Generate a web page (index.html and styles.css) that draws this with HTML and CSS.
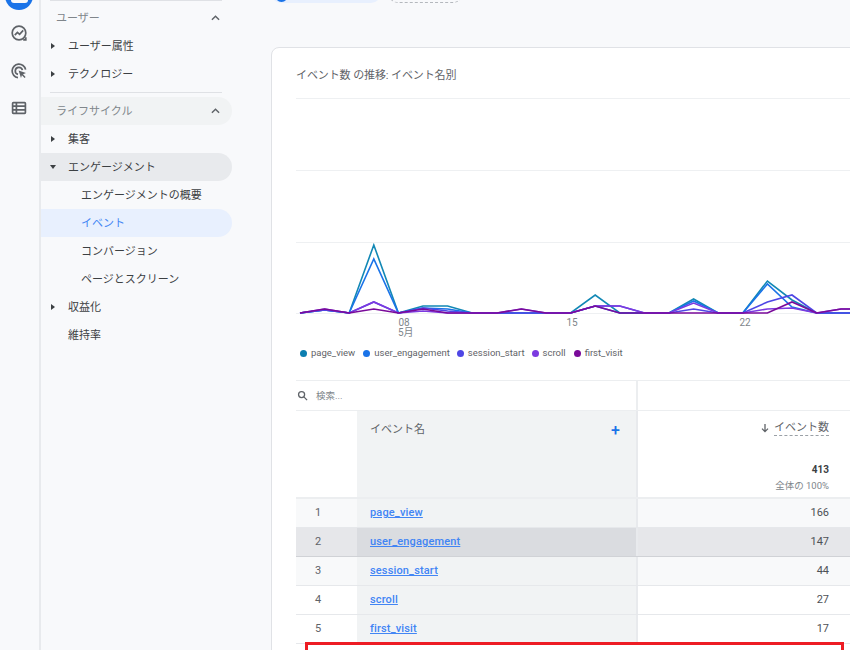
FILE: index.html
```html
<!DOCTYPE html>
<html lang="ja">
<head>
<meta charset="utf-8">
<title>イベント</title>
<link rel="stylesheet" href="styles.css">
</head>
<body>
<div class="page">
  <aside class="rail">
    <span class="rail-home"><i class="rail-home-in"></i></span>
    <svg class="rail-icon" viewBox="0 0 18 18"><circle cx="9" cy="9" r="6.8"/><path d="M4.8 11.2 7.4 8.4l2.2 2 3.6-4"/><path d="M13.2 15.8h2.6v-2.6"/></svg>
    <svg class="rail-icon" viewBox="0 0 18 18"><path d="M15.6 7.6A6.8 6.8 0 1 0 8 15.7"/><path d="M12.4 8.2A3.6 3.6 0 1 0 8 12.4"/><path class="fill" d="M8.6 8.4 16 11l-3 1.2 2.6 2.8-1 1-2.7-2.8L11 16z"/></svg>
    <svg class="rail-icon" viewBox="0 0 18 18"><rect x="2.6" y="3.6" width="12.8" height="10.8" rx=".8"/><path d="M2.6 7.2h12.8M2.6 10.8h12.8M6.4 3.6v10.8"/></svg>
  </aside>

  <nav class="nav">
    <hr class="nav-rule nav-rule-top">
    <div class="nav-head"><span>ユーザー</span><svg class="chev" viewBox="0 0 10 6"><path d="M1 5l4-4 4 4"/></svg></div>
    <div class="nav-item"><i class="caret"></i>ユーザー属性</div>
    <div class="nav-item"><i class="caret"></i>テクノロジー</div>
    <hr class="nav-rule">
    <div class="nav-head nav-head-on"><span>ライフサイクル</span><svg class="chev" viewBox="0 0 10 6"><path d="M1 5l4-4 4 4"/></svg></div>
    <div class="nav-item"><i class="caret"></i>集客</div>
    <div class="nav-item nav-item-open"><i class="caret caret-down"></i>エンゲージメント</div>
    <div class="nav-sub">エンゲージメントの概要</div>
    <div class="nav-sub nav-sub-on">イベント</div>
    <div class="nav-sub">コンバージョン</div>
    <div class="nav-sub">ページとスクリーン</div>
    <div class="nav-item"><i class="caret"></i>収益化</div>
    <div class="nav-item"><i class="caret caret-none"></i>維持率</div>
  </nav>

  <main class="main">
    <div class="chips">
      <div class="chip"><span class="chip-dot"></span></div>
      <div class="chip-add"></div>
    </div>
    <section class="card">
      <h2 class="card-title">イベント数 の推移: イベント名別</h2>
      <svg class="chart" viewBox="296 98 554 232" width="554" height="232">
        <g class="grid">
          <path d="M296 98.5H850M296 170.5H850M296 242.5H850M296 313.5H850"/>
        </g>
        <g class="series">
          <polyline stroke="#1288b5" points="300,313 324.6,310 349.2,313 373.8,245 398.4,313 423,306 447.6,306 472.2,313 546,313 570.6,313 595.2,295 619.8,313 669,313 693.6,299 718.2,313 742.8,313 767.4,281 792,300 816.6,313 850,313"/>
          <polyline stroke="#1a73e8" points="300,313 324.6,310 349.2,313 373.8,259 398.4,313 423,308 447.6,309 472.2,313 546,313 570.6,313 595.2,306 619.8,313 669,313 693.6,301 718.2,313 742.8,313 767.4,284 792,307 816.6,313 850,313"/>
          <polyline stroke="#4f46e5" points="300,313 324.6,310 349.2,313 373.8,302 398.4,313 423,308 447.6,311 472.2,313 546,313 570.6,313 595.2,306 619.8,306 644.4,313 669,313 693.6,309 718.2,313 742.8,313 767.4,302 792,295 816.6,313 850,313"/>
          <polyline stroke="#7c3ae0" points="300,313 324.6,309 349.2,313 373.8,302 398.4,313 423,311 447.6,313 497,313 521.4,309 546,313 570.6,313 595.2,306 619.8,306 644.4,313 669,313 693.6,303 718.2,313 742.8,313 767.4,309 792,308 816.6,313 841,309 850,309"/>
          <polyline stroke="#7a0a9a" points="300,313 324.6,309 349.2,313 373.8,309 398.4,313 423,309 447.6,313 497,313 521.4,309 546,313 570.6,313 595.2,306 619.8,313 742.8,313 767.4,313 792,302 816.6,313 841,309 850,309"/>
        </g>
        <g class="ticks">
          <text x="404" y="326" text-anchor="middle">08</text>
          <text x="572" y="326" text-anchor="middle">15</text>
          <text x="745" y="326" text-anchor="middle">22</text>
        </g>
      </svg>
      <div class="month">5月</div>
      <ul class="legend">
        <li class="legend-wide"><i class="dot dot-a"></i>page_view</li>
        <li><i class="dot dot-b"></i>user_engagement</li>
        <li><i class="dot dot-c"></i>session_start</li>
        <li class="legend-wide"><i class="dot dot-d"></i>scroll</li>
        <li><i class="dot dot-e"></i>first_visit</li>
      </ul>

      <div class="table">
        <div class="search-row">
          <div class="search">
            <svg class="search-icon" viewBox="0 0 12 12"><circle cx="5" cy="5" r="3.3"/><path d="M7.5 7.5 11 11"/></svg>
            <span>検索...</span>
          </div>
          <div class="search-rest"></div>
        </div>
        <div class="row row-head">
          <div class="c-num"></div>
          <div class="c-name head-name"><span>イベント名</span><span class="plus">+</span></div>
          <div class="c-val head-val">
            <div class="head-metric">
              <svg class="sort" viewBox="0 0 10 10"><path d="M5 1v7.4M2 5.6 5 8.6 8 5.6"/></svg>
              <span class="metric-name">イベント数</span>
            </div>
            <strong class="total">413</strong>
            <span class="share">全体の 100%</span>
          </div>
        </div>
        <div class="row row-tint"><div class="c-num">1</div><div class="c-name"><a href="#">page_view</a></div><div class="c-val">166</div></div>
        <div class="row row-hover"><div class="c-num">2</div><div class="c-name"><a href="#">user_engagement</a></div><div class="c-val">147</div></div>
        <div class="row row-tint"><div class="c-num">3</div><div class="c-name"><a href="#">session_start</a></div><div class="c-val">44</div></div>
        <div class="row"><div class="c-num">4</div><div class="c-name"><a href="#">scroll</a></div><div class="c-val">27</div></div>
        <div class="row"><div class="c-num">5</div><div class="c-name"><a href="#">first_visit</a></div><div class="c-val">17</div></div>
      </div>
    </section>
    <div class="highlight"></div>
  </main>
</div>
</body>
</html>
```

FILE: styles.css
```css
* { box-sizing: border-box; }
html, body { margin: 0; padding: 0; height: 100%; overflow: hidden; }
body {
  background: #f8f9fb;
  color: #3c4043;
  font: 11px/14px Roboto, "Noto Sans CJK JP", sans-serif;
}
.page { display: flex; width: 850px; height: 650px; overflow: hidden; position: relative; }

/* icon rail */
.rail {
  flex: 0 0 41px;
  display: flex;
  flex-direction: column;
  align-items: center;
  border-right: 2px solid #e8eaed;
  padding-right: 3px;
}
.rail-home { display: flex; justify-content: center; width: 28px; height: 28px; margin-top: -18px; margin-bottom: 14px; border-radius: 50%; background: #1a73e8; flex: none; position: relative; left: 1px; }
.rail-home-in { width: 17px; height: 16px; margin-top: 5px; background: #f8f9fb; border-radius: 3px; }
.rail-icon { width: 18px; height: 18px; margin-bottom: 19.5px; flex: none; fill: none; stroke: #5f6368; stroke-width: 1.7; position: relative; left: 1px; }
.rail-icon .fill { fill: #5f6368; stroke: none; }

/* navigation */
.nav { flex: 0 0 191px; display: flex; flex-direction: column; }
.nav-rule { height: 1px; margin: 4px 10px 4px 9px; border: 0; background: #dfe1e5; }
.nav-rule-top { margin-top: 0; margin-bottom: 3px; }
.nav-head, .nav-item, .nav-sub { height: 28px; padding-top: 2px; display: flex; align-items: center; border-radius: 0 14px 14px 0; flex: none; }
.nav-head { justify-content: space-between; padding-left: 15px; padding-right: 12px; color: #80868b; }
.nav-head .chev { margin-top: -2px; }
.nav-head-on { background: #f1f3f4; }
.chev { width: 9px; height: 6px; fill: none; stroke: #5f6368; stroke-width: 1.6; }
.nav-item { padding-left: 10px; color: #3c4043; }
.nav-item-open { background: #e8eaed; }
.caret { width: 0; height: 0; margin-top: -2px; margin-right: 13px; border-left: 4px solid #3c4043; border-top: 3px solid transparent; border-bottom: 3px solid transparent; }
.caret-down { border-left: 3px solid transparent; border-right: 3px solid transparent; border-top: 4px solid #3c4043; border-bottom: 0; margin-left: -1px; margin-right: 12px; }
.caret-none { border-left-color: transparent; }
.nav-sub { padding-left: 40px; color: #3c4043; }
.nav-sub-on { background: #e8f0fe; color: #4285f4; }

/* main */
.main { flex: 0 0 618px; position: relative; padding-left: 39px; }
.chips { display: flex; gap: 7px; height: 20px; margin-top: -17px; }
.chip { width: 110px; height: 20px; border-radius: 10px; background: #e8f0fe; padding: 6px 0 0 4px; }
.chip-dot { display: block; width: 13px; height: 13px; border-radius: 50%; background: #1a73e8; }
.chip-add { width: 75px; height: 20px; border: 1px dashed #b4b8bd; border-radius: 10px; }

.card {
  width: 640px;
  margin-top: 44px;
  padding: 21px 0 0 24px;
  background: #fff;
  border: 1px solid #e0e2e6;
  border-radius: 8px 0 0 0;
  height: 700px;
}
.card-title { margin: 0; font-size: 11px; line-height: 14px; font-weight: 400; color: #5f6368; height: 15px; letter-spacing: -.1px; }
.chart { display: block; margin-top: 14px; overflow: hidden; }
.grid path { fill: none; stroke: #eef0f2; stroke-width: 1; }
.series polyline { fill: none; stroke-width: 1.6; stroke-linejoin: miter; }
.ticks text { font: 10px Roboto, sans-serif; fill: #80868b; }
.month { margin: -3px 0 0 102px; font-size: 10px; line-height: 11px; color: #80868b; height: 11px; }

.legend { list-style: none; display: flex; margin: 8px 0 0 4px; padding: 0; height: 14px; font-size: 9.5px; line-height: 14px; color: #5f6368; }
.legend li { display: flex; align-items: center; margin-right: 7px; }
.legend .legend-wide { margin-right: 8px; }
.dot { width: 7px; height: 7px; border-radius: 50%; margin-right: 4px; }
.dot-a { background: #0b7eb0; }
.dot-b { background: #1a73e8; }
.dot-c { background: #4f46e5; }
.dot-d { background: #7c3ae0; }
.dot-e { background: #7a0a9a; }

/* table */
.table { margin-top: 20px; width: 554px; border-top: 1px solid #eceef0; }
.search-row { display: flex; height: 30px; border-bottom: 1px solid #eceef0; }
.search { width: 342px; display: flex; align-items: center; padding-left: 1px; color: #80868b; font-size: 9.5px; border-right: 2px solid #eceef0; }
.search-icon { width: 11px; height: 11px; margin-right: 8px; fill: none; stroke: #5f6368; stroke-width: 1.4; }
.search-rest { flex: 1; }
.row { display: grid; grid-template-columns: 61px 281px 212px; height: 29px; border-bottom: 1px solid #e6e8eb; color: #4d5156; }
.row > div { display: flex; align-items: center; }
.c-num { padding-left: 19px; color: #5f6368; }
.c-name { background: #f1f3f4; padding-left: 13px; border-right: 2px solid #e8eaed; }
.c-name a { color: #4285f4; font-weight: 500; letter-spacing: .15px; }
.row > .c-val { justify-content: flex-end; padding-right: 21px; }
.row-tint { background: #f8f9fa; }
.row-hover { background: #e6e7ea; border-bottom-color: #d0d2d6; }
.row-hover .c-name { background: #dadce0; }
.row .c-name a { text-decoration: underline; }

.row-head { height: 88px; border-bottom: 2px solid #eceef0; }
.row > .head-name { align-items: flex-start; justify-content: space-between; padding: 12px 16px 0 13px; color: #5f6368; }
.plus { color: #1a73e8; font-size: 16px; line-height: 16px; font-weight: 500; }
.row > .head-val { flex-direction: column; align-items: flex-end; justify-content: flex-start; padding-top: 9px; }
.head-metric { display: flex; align-items: center; height: 16px; }
.sort { width: 10px; height: 10px; margin-right: 4px; fill: none; stroke: #5f6368; stroke-width: 1.3; }
.metric-name { color: #5f6368; border-bottom: 1px dashed #9aa0a6; white-space: nowrap; }
.total { margin-top: 27px; font-size: 10px; line-height: 14px; font-weight: 700; color: #3c4043; }
.share { margin-top: 2px; font-size: 9.5px; line-height: 14px; color: #80868b; white-space: nowrap; }

/* red annotation drawn on top of the report */
.highlight { position: absolute; left: 73px; top: 642px; width: 539px; height: 60px; border: 3px solid #ed1c24; pointer-events: none; }
```
